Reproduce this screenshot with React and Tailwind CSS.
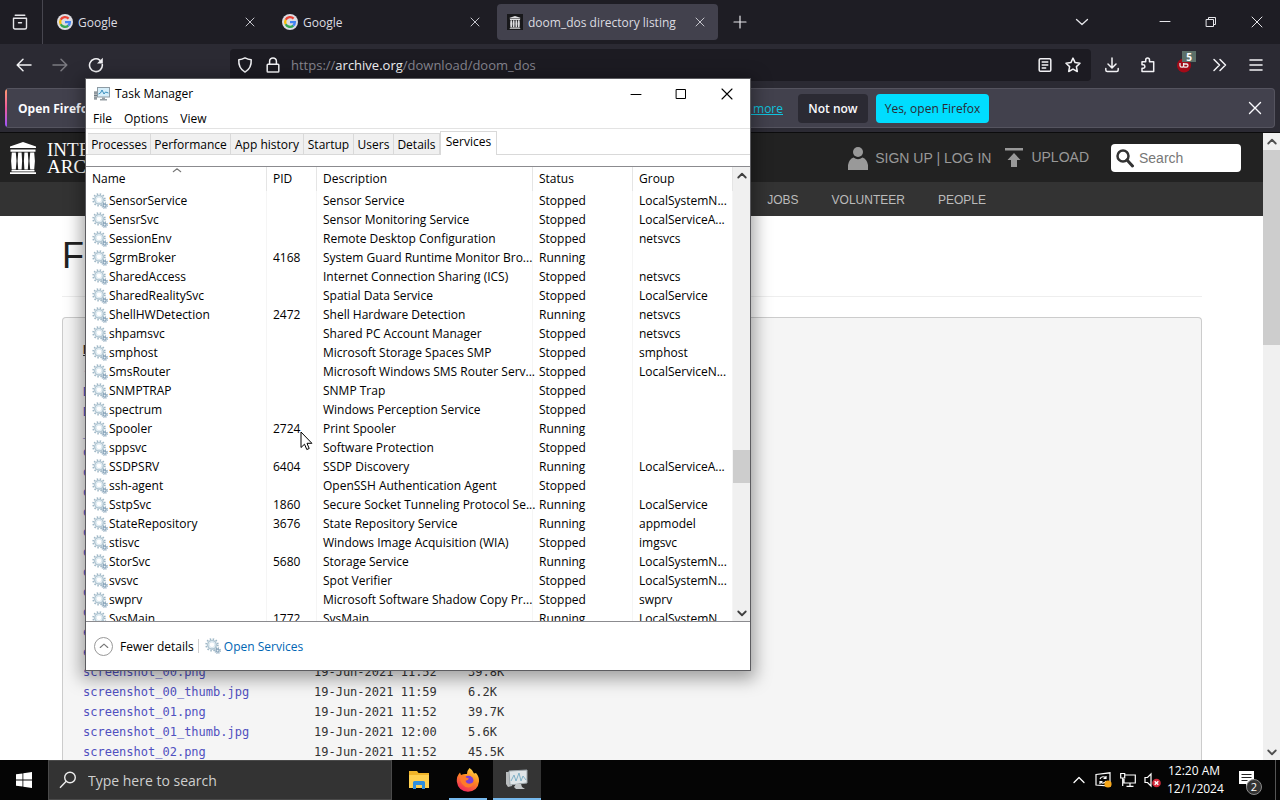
import React from "react";

const services = [
  ["SensorService", "", "Sensor Service", "Stopped", "LocalSystemN..."],
  ["SensrSvc", "", "Sensor Monitoring Service", "Stopped", "LocalServiceA..."],
  ["SessionEnv", "", "Remote Desktop Configuration", "Stopped", "netsvcs"],
  ["SgrmBroker", "4168", "System Guard Runtime Monitor Bro...", "Running", ""],
  ["SharedAccess", "", "Internet Connection Sharing (ICS)", "Stopped", "netsvcs"],
  ["SharedRealitySvc", "", "Spatial Data Service", "Stopped", "LocalService"],
  ["ShellHWDetection", "2472", "Shell Hardware Detection", "Running", "netsvcs"],
  ["shpamsvc", "", "Shared PC Account Manager", "Stopped", "netsvcs"],
  ["smphost", "", "Microsoft Storage Spaces SMP", "Stopped", "smphost"],
  ["SmsRouter", "", "Microsoft Windows SMS Router Serv...", "Stopped", "LocalServiceN..."],
  ["SNMPTRAP", "", "SNMP Trap", "Stopped", ""],
  ["spectrum", "", "Windows Perception Service", "Stopped", ""],
  ["Spooler", "2724", "Print Spooler", "Running", ""],
  ["sppsvc", "", "Software Protection", "Stopped", ""],
  ["SSDPSRV", "6404", "SSDP Discovery", "Running", "LocalServiceA..."],
  ["ssh-agent", "", "OpenSSH Authentication Agent", "Stopped", ""],
  ["SstpSvc", "1860", "Secure Socket Tunneling Protocol Se...", "Running", "LocalService"],
  ["StateRepository", "3676", "State Repository Service", "Running", "appmodel"],
  ["stisvc", "", "Windows Image Acquisition (WIA)", "Stopped", "imgsvc"],
  ["StorSvc", "5680", "Storage Service", "Running", "LocalSystemN..."],
  ["svsvc", "", "Spot Verifier", "Stopped", "LocalSystemN..."],
  ["swprv", "", "Microsoft Software Shadow Copy Pr...", "Stopped", "swprv"],
  ["SysMain", "1772", "SysMain", "Running", "LocalSystemN..."],
];

const files = [
  ["DOOM.zip", "19-Jun-2021 11:47", "2.4M"],
  ["DOOM_files.zip", "19-Jun-2021 11:47", "2.4M"],
  ["__ia_thumb.jpg", "19-Jun-2021 12:05", "7.6K"],
  ["doom_dos.gif", "19-Jun-2021 11:58", "1.1M"],
  ["doom_dos_archive.torrent", "19-Jun-2021 12:05", "4.4K"],
  ["doom_dos_files.xml", "19-Jun-2021 12:05", "9.1K"],
  ["doom_dos_meta.sqlite", "19-Jun-2021 12:04", "18.0K"],
  ["doom_dos_meta.xml", "19-Jun-2021 12:05", "1.3K"],
  ["doom_dos_reviews.xml", "19-Jun-2021 12:05", "1.0K"],
  ["doom_dos_screen.gif", "19-Jun-2021 11:58", "1.1M"],
  ["doom_dos_screen.jpg", "19-Jun-2021 11:58", "6.9K"],
  ["doom_dos_screen.png", "19-Jun-2021 11:52", "38.2K"],
  ["emulator_00.png", "19-Jun-2021 11:52", "39.8K"],
  ["emulator_01.png", "19-Jun-2021 11:52", "39.8K"],
  ["screenshot_00.png", "19-Jun-2021 11:52", "39.8K"],
  ["screenshot_00_thumb.jpg", "19-Jun-2021 11:59", "6.2K"],
  ["screenshot_01.png", "19-Jun-2021 11:52", "39.7K"],
  ["screenshot_01_thumb.jpg", "19-Jun-2021 12:00", "5.6K"],
  ["screenshot_02.png", "19-Jun-2021 11:52", "45.5K"],
];

function Line({ d, size = 16, w = 1.5, className = "" }) {
  return (
    <svg width={size} height={size} viewBox="0 0 16 16" fill="none" stroke="currentColor" strokeWidth={w} strokeLinecap="round" strokeLinejoin="round" className={"shrink-0 " + className} aria-hidden="true">
      <path d={d} />
    </svg>
  );
}

function GoogleIcon() {
  return (
    <svg width="16" height="16" viewBox="0 0 16 16" fill="none" className="shrink-0" aria-hidden="true">
      <circle cx="8" cy="8" r="8" fill="#dcdce2" />
      <g strokeWidth="2.3">
        <path d="M11.6 4.6A4.9 4.9 0 0 0 3.7 5.8" stroke="#ea4335" />
        <path d="M3.7 5.7A4.9 4.9 0 0 0 3.7 10.3" stroke="#fbbc05" />
        <path d="M3.7 10.2A4.9 4.9 0 0 0 11.3 11.6" stroke="#34a853" />
        <path d="M11.2 11.7A4.9 4.9 0 0 0 12.9 8.1H8" stroke="#4285f4" />
      </g>
    </svg>
  );
}

function Temple({ width, height, className = "" }) {
  return (
    <svg width={width} height={height} viewBox="0 0 28 32" fill="currentColor" className={"shrink-0 " + className} aria-hidden="true">
      <path d="M14 0L27 4.4V6H1V4.4zM1.5 7.5h25v2.2h-25zM2.5 28h23v1.6h-23zM1 30.2h26V32H1z" />
      <path d="M2.8 10.5h4l.7 8.5-.7 8.4h-4l-.7-8.4zM9.2 10.5h3.4l.5 8.5-.5 8.4H9.2L8.6 19zM15.4 10.5h3.4l.6 8.5-.6 8.4h-3.4l-.5-8.4zM21.2 10.5h4l.7 8.5-.7 8.4h-4l-.7-8.4z" />
    </svg>
  );
}

function Gears() {
  return (
    <svg width="16" height="16" viewBox="0 0 16 16" fill="none" className="shrink-0" aria-hidden="true">
      <circle cx="7" cy="6.8" r="5.9" stroke="#9db6c5" strokeWidth="1.6" strokeDasharray="1.5 1.59" />
      <circle cx="7" cy="6.8" r="4.3" stroke="#b3c7d3" strokeWidth="1.6" fill="#eef8fc" />
      <circle cx="7" cy="6.8" r="2.8" stroke="#dbe8ef" strokeWidth="1" fill="#fff" />
      <circle cx="12.6" cy="12.6" r="2.6" stroke="#8aa6bb" strokeWidth="1.3" strokeDasharray="1.1 .94" />
      <circle cx="12.6" cy="12.6" r="1.5" stroke="#8ba6bb" strokeWidth="1.2" fill="#e6f0f6" />
    </svg>
  );
}

function Tab({ icon, title, active }) {
  return (
    <div role="tab" aria-selected={!!active} className={"flex h-9 w-[221px] items-center rounded px-[10px] " + (active ? "bg-[#42414d]" : "")}>
      {icon}
      <span className="ml-[5px] flex-1 truncate pt-[2px] text-[12px] text-[#dcdce0]">{title}</span>
      <button aria-label={"Close " + title} className="flex h-4 w-4 items-center justify-center text-[#c4c4cb]">
        <Line d="M4 4l8 8M12 4l-8 8" w={1} />
      </button>
    </div>
  );
}

function TabStrip() {
  return (
    <div className="flex h-11 shrink-0 items-center bg-[#1e1d24] text-[#e6e6ea]">
      <button aria-label="Firefox View" className="flex h-full w-[43px] items-center justify-center border-r border-[#47464f] pr-[2px]">
        <Line d="M3.2 1.2h9.6M1.5 4.2h13v9.3q0 1.5-1.5 1.5H3q-1.5 0-1.5-1.5zM6.5 8.8h3" w={1.4} />
      </button>
      <div role="tablist" className="ml-1 flex gap-1">
        <Tab icon={<GoogleIcon />} title="Google" />
        <Tab icon={<GoogleIcon />} title="Google" />
        <Tab
          active
          icon={
            <span className="flex h-4 w-4 shrink-0 items-center justify-center bg-[#18181b] text-[#dedee0]">
              <Temple width="12" height="13" />
            </span>
          }
          title="doom_dos directory listing"
        />
      </div>
      <button aria-label="New tab" className="ml-[14px] flex h-4 w-4 items-center justify-center">
        <Line d="M8 2v12M2 8h12" w={1.2} />
      </button>
      <div className="flex-1" />
      <button aria-label="List all tabs" className="mr-[52px] flex h-4 w-4 items-center justify-center">
        <Line d="M2.5 5.5L8 10.5l5.5-5" w={1.3} />
      </button>
      <button aria-label="Minimize" className="flex h-full w-[46px] items-center justify-center">
        <Line d="M3 7.5h10" w={1} />
      </button>
      <button aria-label="Restore" className="flex h-full w-[46px] items-center justify-center">
        <Line d="M3.5 5.5h7v7h-7zM5.5 5.5v-2h7v7h-2" w={1} />
      </button>
      <button aria-label="Close" className="flex h-full w-[46px] items-center justify-center">
        <Line d="M3 3l10 10M13 3L3 13" w={1} />
      </button>
    </div>
  );
}

function Tool({ label, children, className = "" }) {
  return (
    <button aria-label={label} className={"flex h-9 w-9 shrink-0 items-center justify-center text-[#f2f2f5] " + className}>
      {children}
    </button>
  );
}

function Toolbar() {
  return (
    <div className="flex h-[42px] shrink-0 items-center bg-[#2b2a33] px-[6px]">
      <Tool label="Back"><Line d="M1.5 8h13.500M7 2.200L1.200 8 7 13.800" /></Tool>
      <Tool label="Forward" className="opacity-40"><Line d="M1 8h13.500M9 2.200L14.800 8 9 13.800" /></Tool>
      <Tool label="Reload">
        <svg width="16" height="16" viewBox="0 0 16 16" fill="none" aria-hidden="true">
          <path d="M14.300 7.500A6.400 6.400 0 1 1 11.800 3.100" stroke="currentColor" strokeWidth="1.600" strokeLinecap="round" />
          <path d="M14.800.8V6.500H9z" fill="currentColor" />
        </svg>
      </Tool>
      <div className="ml-[116px] mr-[3px] flex h-8 flex-1 items-center rounded bg-[#1c1b22] pl-[7px] pr-[10px] text-[#f2f2f5]">
        <Line d="M8 .9q3 1.700 6.200 1.800.6 8.400-6.200 12.400Q1.200 11.100 1.800 2.700 5 2.600 8 .9z" />
        <Line className="ml-3" d="M3 7.200h10q.8 0 .8.8v6.200q0 .8-.8.8H3q-.8 0-.8-.8V8q0-.8.8-.8M4.600 7V4.300a3.400 3.400 0 0 1 6.800 0V7" />
        <div className="ml-[10px] flex flex-1 items-center pt-[2px] text-[13px] text-[#85848e]">
          <span>https://<span className="text-[#f2f2f5]">archive.org</span>/download/doom_dos</span>
        </div>
        <Line d="M3.500 1.700h9q1.300 0 1.300 1.300v10q0 1.300-1.300 1.300h-9Q2.200 14.300 2.200 13V3q0-1.300 1.300-1.300M5.200 5h5.600M5.200 8h5.600M5.200 11h3.500" />
        <Line className="ml-3" d="M8 1.100l2.100 4.500 4.900.6-3.600 3.400.9 4.900L8 12.100l-4.300 2.400.9-4.900L1 6.200l4.900-.6z" />
      </div>
      <Tool label="Downloads"><Line d="M8 1v9.500M4 7l4 4 4-4M1.800 11.500v1.500q0 1.500 1.500 1.500h9.400q1.500 0 1.500-1.500v-1.500" /></Tool>
      <Tool label="Extensions"><Line d="M2 4.700h3.700V3a1.900 1.900 0 0 1 3.800 0v1.700h4.200V14.500H2V11.200h1.200a1.700 1.700 0 0 0 0-3.400H2z" /></Tool>
      <Tool label="uBlock Origin">
        <span className="relative flex h-4 w-4">
          <svg width="16" height="16" viewBox="0 0 16 16" aria-hidden="true">
            <circle cx="8" cy="8.500" r="7" fill="#a30a18" />
            <path d="M4 6v2.500q0 1.700 1.800 1.700T7.600 8.500V6v3q0 1.200 1.300 1.200h1.500a1.600 1.600 0 0 0 0-3.200H8" fill="none" stroke="#eee" strokeWidth="1.300" />
          </svg>
          <span className="absolute -top-[6px] left-[6px] flex h-[11px] w-[14px] items-center justify-center bg-[#5c7069] text-[10px] font-bold leading-none text-white">5</span>
        </span>
      </Tool>
      <Tool label="More tools"><Line d="M2 2.500L7.500 8 2 13.500M8 2.500L13.500 8 8 13.500" /></Tool>
      <Tool label="Menu"><Line d="M2 3h12M2 8h12M2 13h12" w={1.600} /></Tool>
    </div>
  );
}

function NoticeBar() {
  return (
    <div className="shrink-0 border-b border-[#0c0c0d] bg-[#2b2a33] px-[5px] pb-1 pt-[2px]">
      <div className="flex h-10 items-center overflow-hidden rounded border border-l-0 border-[#55545f] bg-[#42414d]">
        <div className="h-full w-[2px] bg-gradient-to-b from-[#ff9a6c] via-[#f0569b] to-[#9a4dff]" />
        <div className="ml-[11px] flex w-[765px] items-center justify-between pt-[2px] text-[12px] text-[#fbfbfe]">
          <strong className="font-bold">Open Firefox automatically every time you restart your computer?</strong>
          <a href="#learn" className="text-[#0fc3df] underline">Learn more</a>
        </div>
        <button className="ml-[15px] h-[29px] w-[70px] rounded bg-[#2b2a33] pt-px text-[12px] font-semibold text-[#fbfbfe]">Not now</button>
        <button className="ml-2 h-[29px] w-[113px] rounded bg-[#00ddff] pt-px text-[12px] text-[#2b2a33]">Yes, open Firefox</button>
        <div className="flex-1" />
        <button aria-label="Dismiss" className="mr-[11px] text-[#fbfbfe]">
          <Line d="M2.500 2.500l11 11M13.500 2.500l-11 11" w={1.400} />
        </button>
      </div>
    </div>
  );
}

function ArchivePage() {
  return (
    <div className="flex min-h-0 flex-1">
      <div className="flex min-w-0 flex-1 flex-col overflow-hidden bg-white font-['Liberation_Sans',Arial,sans-serif]">
        <header className="flex h-[49px] shrink-0 items-center bg-[#222] pl-[9px] pr-[22px] text-[#999]">
          <Temple width="28" height="32" className="text-white" />
          <div className="ml-[10px] font-['Liberation_Serif',serif] text-[19px] leading-[17px] text-white">
            INTERNET<br />ARCHIVE
          </div>
          <div className="flex-1" />
          <svg width="20" height="24" viewBox="0 0 20 24" fill="#999" aria-hidden="true">
            <circle cx="10" cy="6" r="5" />
            <path d="M0 24V19q1-6 5.500-7.500Q10 15 14.500 11.500 19 13 20 19v5z" />
          </svg>
          <a href="#signup" className="ml-[7px] pt-px text-[14px]">SIGN UP | LOG IN</a>
          <svg width="18" height="20" viewBox="0 0 18 20" fill="#999" className="ml-[14px]" aria-hidden="true">
            <path d="M0 0h18v2.500H0zM9 5l6.500 7h-3.500v7H6v-7H2.500z" />
          </svg>
          <a href="#upload" className="ml-2 text-[14px]">UPLOAD</a>
          <label className="ml-[22px] flex h-7 w-[130px] items-center rounded bg-white pl-1">
            <svg width="20" height="20" viewBox="0 0 20 20" fill="none" stroke="#333" aria-hidden="true">
              <circle cx="8" cy="8" r="5.500" strokeWidth="2.500" />
              <path d="M12 12l5.500 6" strokeWidth="3" strokeLinecap="round" />
            </svg>
            <input aria-label="Search the archive" placeholder="Search" className="ml-1 w-24 bg-transparent pt-px text-[14px] outline-none placeholder:text-[#777]" />
          </label>
        </header>
        <nav className="flex h-[34px] shrink-0 items-center justify-end gap-[33px] bg-[#333] pr-[277px] pt-px text-[12px] text-[#bbb]">
          {["ABOUT", "BLOG", "PROJECTS", "HELP", "DONATE", "CONTACT", "JOBS", "VOLUNTEER", "PEOPLE"].map((n) => (
            <a key={n} href={"#" + n.toLowerCase()}>{n}</a>
          ))}
        </nav>
        <main className="ml-[62px] mr-[61px] flex min-h-0 flex-1 flex-col pt-5">
          <h1 className="shrink-0 text-[36px] leading-10 text-[#222]">Files for doom_dos</h1>
          <hr className="mt-5 shrink-0 border-[#eee]" />
          <div className="mt-5 min-h-0 flex-1 overflow-hidden rounded-t border border-b-0 border-[#ccc] bg-[#f5f5f5] px-5 pt-5">
            <table className="table-fixed text-left font-['DejaVu_Sans_Mono',monospace] text-[12px] leading-5 text-[#333]">
              <colgroup>
                <col className="w-[231px]" />
                <col className="w-[154px]" />
                <col className="w-[100px]" />
              </colgroup>
              <thead>
                <tr className="h-6">
                  <th className="p-0 underline">Name</th>
                  <th className="p-0 underline">Last modified</th>
                  <th className="p-0 underline">Size</th>
                </tr>
              </thead>
              <tbody>
                <tr className="h-5">
                  <td className="p-0 text-[#5050c0]" colSpan={3}><a href="#parent">↑ Go to parent directory</a></td>
                </tr>
                {files.map(([name, date, size]) => (
                  <tr key={name} className="h-5">
                    <td className="p-0"><a href={"#" + name} className="text-[#5050c0]">{name}</a></td>
                    <td className="p-0">{date}</td>
                    <td className="p-0">{size}</td>
                  </tr>
                ))}
              </tbody>
            </table>
          </div>
        </main>
      </div>
      <div className="flex w-[17px] shrink-0 flex-col items-center bg-[#f0f0f0] text-[#505050]">
        <span className="flex h-[17px] items-center"><Line size={12} d="M3 10l5-5 5 5" w={2.400} /></span>
        <div className="h-[195px] w-full bg-[#cdcdcd]" />
        <div className="flex-1" />
        <span className="flex h-[17px] items-center"><Line size={12} d="M3 6l5 5 5-5" w={2.400} /></span>
      </div>
    </div>
  );
}

function MonitorIcon() {
  return (
    <svg width="17" height="16" viewBox="0 0 17 16" fill="none" className="shrink-0" aria-hidden="true">
      <path d="M1 5h3v9H1z" fill="#b5b9bc" />
      <path d="M1 7h3M1 9.500h3M1 12h3" stroke="#6f7b83" />
      <rect x="4.500" y="1.500" width="12" height="9.500" fill="#d6eefa" stroke="#8e9ba4" />
      <path d="M5.500 8l2-1 1.500-3 2 4 1.500-2 3 1" stroke="#3a8fbd" />
      <path d="M9 11.500h3v1.500h2v1.500H7V13h2z" fill="#959ea3" />
    </svg>
  );
}

const headCell = "border-r border-[#e5e5e5] p-0 pl-[6px] text-left font-normal";
const cell = "border-r border-[#f5f5f5] p-0 pl-[6px] pt-px whitespace-nowrap";

function TaskManager() {
  return (
    <section aria-label="Task Manager" className="absolute left-[85px] top-[78px] flex h-[593px] w-[666px] flex-col border border-[#5c5c60] bg-white text-[12px] text-black shadow-[0_4px_16px_4px_rgba(0,0,0,0.35)]">
      <div className="flex h-[29px] shrink-0 items-center pl-[7px]">
        <MonitorIcon />
        <h2 className="ml-[5px] flex-1 pt-px text-[12px]">Task Manager</h2>
        <button aria-label="Minimize" className="flex h-full w-[45px] items-center justify-center"><Line d="M3 8.500h10" w={1} /></button>
        <button aria-label="Maximize" className="flex h-full w-[46px] items-center justify-center"><Line d="M3.500 3.500h9v9h-9z" w={1} /></button>
        <button aria-label="Close" className="flex h-full w-[46px] items-center justify-center"><Line d="M3 3l10 10M13 3L3 13" w={1.100} /></button>
      </div>
      <div className="flex h-[21px] shrink-0 items-center gap-3 border-b border-[#e3e3e3] pl-[7px] pt-[2px]">
        <button>File</button>
        <button>Options</button>
        <button>View</button>
      </div>
      <div role="tablist" className="flex h-[26px] shrink-0 items-end border-b border-[#d9d9d9] pl-[2px]">
        {[
          ["Processes", "w-[63px]"],
          ["Performance", "w-[80px]"],
          ["App history", "w-[73px]"],
          ["Startup", "w-[50px]"],
          ["Users", "w-[40px]"],
          ["Details", "w-[46px]"],
        ].map(([t, w]) => (
          <button role="tab" key={t} className={"flex h-[21px] items-center justify-center whitespace-nowrap border-r border-t border-[#d9d9d9] bg-[#f0f0f0] pt-px " + w}>{t}</button>
        ))}
        <button role="tab" aria-selected="true" className="-mb-px h-6 w-[57px] border border-b-0 border-[#d9d9d9] bg-white pb-1">Services</button>
      </div>
      <div className="mt-[11px] flex min-h-0 flex-1 border-y border-[#8b8b8f]">
        <div className="min-w-0 flex-1 overflow-hidden">
          <table className="w-full table-fixed border-separate border-spacing-0">
            <colgroup>
              <col className="w-[181px]" />
              <col className="w-[50px]" />
              <col className="w-[216px]" />
              <col className="w-[100px]" />
              <col />
            </colgroup>
            <thead>
              <tr className="h-6">
                <th className={headCell}>
                  <span className="relative block">
                    Name
                    <span className="absolute -top-[5px] left-[79px] text-[#777]"><Line size={12} d="M3 9l5-4 5 4" w={1.400} /></span>
                  </span>
                </th>
                <th className={headCell}>PID</th>
                <th className={headCell}>Description</th>
                <th className={headCell}>Status</th>
                <th className={headCell}>Group</th>
              </tr>
            </thead>
            <tbody>
              {services.map(([name, pid, desc, status, group]) => (
                <tr key={name} className="h-[19px]">
                  <td className={cell}>
                    <span className="flex h-[18px] items-center gap-px"><Gears />{name}</span>
                  </td>
                  <td className={cell}>{pid}</td>
                  <td className={cell}>{desc}</td>
                  <td className={cell}>{status}</td>
                  <td className={cell}>{group}</td>
                </tr>
              ))}
            </tbody>
          </table>
        </div>
        <div className="flex w-[17px] shrink-0 flex-col items-center bg-[#f0f0f0] text-[#404040]">
          <span className="flex h-[17px] items-center"><Line size={12} d="M3 10l5-5 5 5" w={2.400} /></span>
          <div className="flex-[266]" />
          <div className="h-[33px] w-full bg-[#cdcdcd]" />
          <div className="flex-[121]" />
          <span className="flex h-[17px] items-center"><Line size={12} d="M3 6l5 5 5-5" w={2.400} /></span>
        </div>
      </div>
      <footer className="flex h-12 shrink-0 items-center pl-2">
        <button className="flex items-center">
          <span className="flex h-[19px] w-[19px] items-center justify-center rounded-full border border-[#999] text-[#777]"><Line size={12} d="M3 10l5-4.500L13 10" w={1.500} /></span>
          <span className="ml-[7px] pt-px">Fewer details</span>
        </button>
        <span className="ml-1 h-[14px] w-px bg-[#d0d0d0]" />
        <a href="#services" className="ml-[6px] flex items-center gap-[3px] text-[#0066b4]"><Gears /><span className="pt-px">Open Services</span></a>
      </footer>
      <svg width="13" height="20" viewBox="0 0 13 20" className="absolute left-[214px] top-[352px]" aria-hidden="true">
        <path d="M1 1v15.500l3.500-3.300L6.800 18.500l2.400-1L7 12.300h4.900z" fill="#fff" stroke="#000" strokeWidth="1" />
      </svg>
    </section>
  );
}

function Taskbar() {
  return (
    <footer className="flex h-10 shrink-0 items-center bg-[#050505] text-white">
      <button aria-label="Start" className="flex h-full w-12 items-center justify-center">
        <svg width="16" height="16" viewBox="0 0 16 16" fill="#fff" aria-hidden="true">
          <path d="M0 2.300L6.500 1.400v6.200H0zM7.300 1.300L16 0v7.600H7.300zM0 8.400h6.500v6.200L0 13.700zM7.300 8.400H16V16l-8.700-1.300z" />
        </svg>
      </button>
      <label className="flex h-full w-[344px] items-center border border-[#4a4a4a] bg-[#333] pl-[10px]">
        <svg width="18" height="18" viewBox="0 0 18 18" fill="none" stroke="#eee" strokeWidth="1.400" aria-hidden="true">
          <circle cx="11" cy="6.500" r="5.300" />
          <path d="M7.200 10.300L1 16.800" />
        </svg>
        <input aria-label="Taskbar search" placeholder="Type here to search" className="ml-[11px] w-64 bg-transparent text-[14px] outline-none placeholder:text-[#cfcfcf]" />
      </label>
      <button aria-label="File Explorer" className="ml-[2px] flex h-full w-[49px] items-center justify-center">
        <svg width="22" height="20" viewBox="0 0 22 20" aria-hidden="true">
          <path d="M1 1h8l1.500 2H21v15H1z" fill="#f0b429" />
          <path d="M1 5h20v13H1z" fill="#ffd050" />
          <path d="M5 19v-6.500q0-1.500 1.500-1.500h9q1.500 0 1.500 1.500V19h-3v-4H8v4z" fill="#2f8fdd" />
        </svg>
      </button>
      <button aria-label="Firefox" className="flex h-full w-[50px] flex-col items-center justify-end">
        <svg width="24" height="24" viewBox="0 0 24 24" className="mb-[6px]" aria-hidden="true">
          <defs>
            <linearGradient id="fx" x1=".8" y1="0" x2=".3" y2="1">
              <stop offset="0" stopColor="#ffe14a" />
              <stop offset=".45" stopColor="#ff8a1f" />
              <stop offset="1" stopColor="#f0265e" />
            </linearGradient>
          </defs>
          <path d="M13.500 0Q17 2 18 5.500L20 5Q23.500 9 23 13.500 22 23 12 23.800 2 23 .8 13.500.5 8 4 4.500L5 7Q8 5.500 11 6 11 2.500 13.500 0z" fill="url(#fx)" />
          <circle cx="12.500" cy="12.800" r="5" fill="#7b3fd6" />
          <path d="M3.500 8q3-1.500 5.500.5 1 1.500 4 2-1 2-3.500 2.300 .8 3 4 3 3.200-.2 4.500-3 .5 6-5.500 6.700Q4.500 19 3.500 8z" fill="#ff7a2a" />
        </svg>
        <span className="h-[2px] w-[38px] bg-[#76b9ed]" />
      </button>
      <button aria-label="Task Manager" className="flex h-full w-12 flex-col items-center justify-end bg-[#343434]">
        <svg width="24" height="22" viewBox="0 0 24 22" fill="none" className="mb-[7px]" aria-hidden="true">
          <path d="M1 3h6v14l-4 1-2-3z" fill="#b9bcbe" />
          <path d="M4 2l18-1v13l-17 2z" fill="#dfe5e8" stroke="#9ca5aa" />
          <path d="M6 12l3-6 2 6 3-8 2 8 2-5 3 4" stroke="#7fb0c6" />
          <path d="M11 15h5l1 3 3 2h-9l-2-2z" fill="#c3c7c9" />
        </svg>
        <span className="h-[2px] w-full bg-[#76b9ed]" />
      </button>
      <div className="flex-1" />
      <div className="flex items-center gap-2">
        <button aria-label="Show hidden icons"><Line d="M3 10.500L8 5.500l5 5" w={1.300} /></button>
        <svg width="17" height="16" viewBox="0 0 17 16" fill="none" stroke="#fff" strokeWidth="1.200" aria-hidden="true">
          <path d="M1 2.500L15 .8V14L1 13zM5 7q1-3 4.500-2L11 6.500M11 4v2.500H8.500M11 9q-1 2.500-4 2L5 9.500M5 12V9.500h2.500" />
          <circle cx="13" cy="12" r="3.600" fill="#f7a81b" stroke="none" />
        </svg>
        <svg width="16" height="16" viewBox="0 0 16 16" fill="none" stroke="#fff" strokeWidth="1.200" aria-hidden="true">
          <path d="M5 3h10.300v8H4V7M10 11v3M6.500 14.300h7M.7 1.500h4V6h-4zM2.700 6v8" />
        </svg>
        <svg width="17" height="16" viewBox="0 0 17 16" fill="none" aria-hidden="true">
          <path d="M1 5.500h2.500L7 2v12l-3.500-3.500H1z" stroke="#fff" strokeWidth="1.200" />
          <circle cx="12.500" cy="11" r="4.300" fill="#d6283a" />
          <path d="M10.700 9.200l3.600 3.600M14.300 9.200l-3.600 3.600" stroke="#fff" strokeWidth="1.400" />
        </svg>
      </div>
      <div className="ml-[6px] w-[54px] whitespace-nowrap text-center text-[12px] leading-[18px]">
        12:20 AM<br />12/1/2024
      </div>
      <button aria-label="Notifications" className="relative ml-[17px] mr-3 h-10 w-[25px]">
        <svg width="17" height="18" viewBox="0 0 17 18" className="absolute left-0 top-[11px]" aria-hidden="true">
          <path d="M1 0h15v13h-5l-3 3.500V13H1z" fill="#fff" />
          <path d="M3.500 3.500h10M3.500 6.500h10M3.500 9.500h6" stroke="#222" strokeWidth="1.200" />
        </svg>
        <span className="absolute left-2 top-[19px] flex h-4 w-4 items-center justify-center rounded-full border border-[#8a8a8a] bg-[#333] text-[11px]">2</span>
      </button>
      <span className="mr-1 h-10 w-px bg-[#555]" />
    </footer>
  );
}

export default function App() {
  return (
    <div className="relative flex h-screen flex-col overflow-hidden bg-black font-['Open_Sans','Noto_Sans',sans-serif]">
      <TabStrip />
      <Toolbar />
      <NoticeBar />
      <ArchivePage />
      <Taskbar />
      <TaskManager />
    </div>
  );
}
